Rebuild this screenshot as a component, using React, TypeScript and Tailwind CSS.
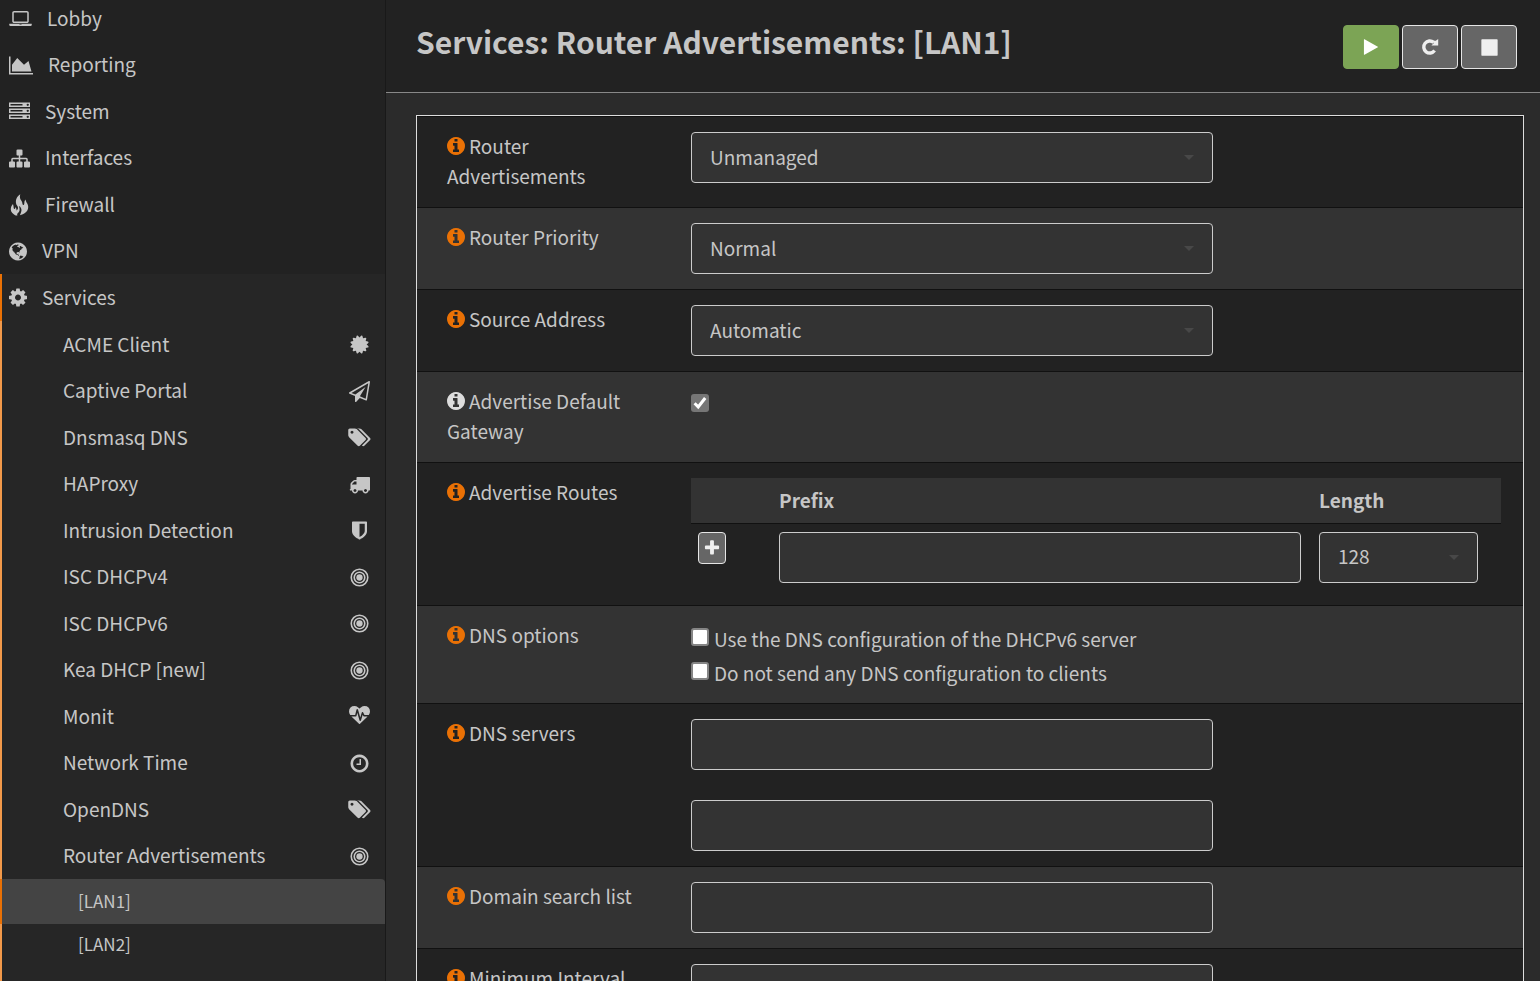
import type { ReactNode } from "react";

type IconName =
  | "laptop" | "chart" | "server" | "sitemap" | "fire" | "globe" | "cog"
  | "certificate" | "plane" | "tags" | "truck" | "shield" | "heartbeat" | "clock"
  | "info" | "play" | "stop" | "plus";

const icons: Record<IconName, string> = {
  laptop: "M416 1280q-66 0-113-47t-47-113v-704q0-66 47-113t113-47h1088q66 0 113 47t47 113v704q0 66-47 113t-113 47h-1088zm-32-864v704q0 13 9.5 22.5t22.5 9.5h1088q13 0 22.5-9.5t9.5-22.5v-704q0-13-9.5-22.5t-22.5-9.5h-1088q-13 0-22.5 9.5t-9.5 22.5zm1376 928h160v96q0 40-47 68t-113 28h-1600q-66 0-113-28t-47-68v-96h1760zm-720 96q16 0 16-16t-16-16h-160q-16 0-16 16t16 16h160z",
  chart: "M2048 1536v128h-2048v-1536h128v1408h1920zm-384-1024l256 896h-1664v-576l448-576 576 576z",
  server: "M128 1408h1024v-128h-1024v128zm0-512h1024v-128h-1024v128zm1568 448q0-40-28-68t-68-28-68 28-28 68 28 68 68 28 68-28 28-68zm-1568-960h1024v-128h-1024v128zm1568 448q0-40-28-68t-68-28-68 28-28 68 28 68 68 28 68-28 28-68zm0-512q0-40-28-68t-68-28-68 28-28 68 28 68 68 28 68-28 28-68zm96 832v384h-1792v-384h1792zm0-512v384h-1792v-384h1792zm0-512v384h-1792v-384h1792z",
  sitemap: "M1792 1248v320q0 40-28 68t-68 28h-320q-40 0-68-28t-28-68v-320q0-40 28-68t68-28h96v-192h-512v192h96q40 0 68 28t28 68v320q0 40-28 68t-68 28h-320q-40 0-68-28t-28-68v-320q0-40 28-68t68-28h96v-192h-512v192h96q40 0 68 28t28 68v320q0 40-28 68t-68 28h-320q-40 0-68-28t-28-68v-320q0-40 28-68t68-28h96v-192q0-52 38-90t90-38h512v-192h-96q-40 0-68-28t-28-68v-320q0-40 28-68t68-28h320q40 0 68 28t28 68v320q0 40-28 68t-68 28h-96v192h512q52 0 90 38t38 90v192h96q40 0 68 28t28 68z",
  fire: "M960 0C640 220 560 480 600 760C620 960 800 1010 770 1200C750 1310 690 1340 640 1400C650 1250 610 1170 540 1100C545 1250 490 1290 430 1240C370 1180 420 1060 340 840C220 980 150 1130 150 1290C150 1520 330 1690 520 1790C640 1850 760 1830 700 1720C660 1640 860 1580 900 1380C920 1250 890 1140 840 1010C1010 1080 1080 1250 1060 1400C1040 1560 960 1680 930 1800C1260 1720 1640 1500 1640 1100C1640 800 1420 700 1420 460C1300 560 1320 700 1300 820C1290 900 1240 960 1180 900C1130 840 1160 700 1060 560C950 400 890 240 960 0z",
  globe: "M896 128q209 0 385.5 103t279.5 279.5 103 385.5-103 385.5-279.5 279.5-385.5 103-385.5-103-279.5-279.5-103-385.5 103-385.5 279.5-279.5 385.5-103zm274 521q-2 1-9.5 9.5t-13.5 9.5q2 0 4.5-5t5-11 3.5-7q6-7 22-15 14-6 52-12 34-8 51 11-2-2 9.5-13t14.5-12q3-2 15-4.5t15-7.5l2-22q-12 1-17.5-7t-6.5-21q0 2-6 8 0-7-4.5-8t-11.5 1-9 1q-10-3-15-7.5t-8-16.5-4-15q-2-5-9.5-11t-9.5-10q-1-2-2.5-5.5t-3-6.5-4-5.5-5.5-2.5-7 5-7.5 10-4.5 5q-3-2-6-1.5t-4.5 1-4.5 3-5 3.5q-3 2-8.5 3t-8.5 2q15-5-1-11-10-4-16-3 9-4 7.5-12t-8.5-14h5q-1-4-8.5-8.5t-17.5-8.5-13-6q-8-5-34-9.5t-33-.5q-5 6-4.5 10.5t4 14 3.5 12.5q1 6-5.5 13t-6.5 12q0 7 14 15.5t10 21.5q-3 8-16 16t-16 12q-5 8-1.5 18.5t10.5 16.5q2 2 1.5 4t-3.5 4.5-5.5 4-6.5 3.5l-3 2q-11 5-20.5-6t-13.5-26q-7-25-16-30-23-8-29 1-5-13-41-26-25-9-58-4 6-1 0-15-7-15-19-12 3-6 4-17.5t1-13.5q3-13 12-23 1-1 7-8.5t9.5-13.5.5-6q35 4 50-11 5-5 11.5-17t10.5-17q9-6 14-5.5t14.5 5.5 14.5 5q14 1 15.5-11t-7.5-20q12 1 3-17-4-7-8-9-12-4-27 5-8 4 2 8-1-1-9.5 10.5t-16.5 17.5-16-5q-1-1-5.5-13.5t-9.5-13.5q-8 0-16 15 3-8-11-15t-24-8q19-12-8-27-7-4-20.5-5t-19.5 4q-5 7-5.5 11.5t5 8 10.5 5.5 11.5 4 8.5 3q14 10 8 14-2 1-8.5 3.5t-11.5 4.5-6 4q-3 4 0 14t-2 14q-5-5-9-17.5t-7-16.5q7 9-25 6l-10-1q-4 0-16 2t-20.5 1-13.5-8q-4-8 0-20 1-4 4-2-4-3-11-9.5t-10-8.5q-46 15-94 41 6 1 12-1 5-2 13-6.5t10-5.5q34-14 42-7l5-5q14 16 20 25-7-4-30-1-20 6-22 12 7 12 5 18-4-3-11.5-10t-14.5-11-15-5q-16 0-22 1-146 80-235 222 7 7 12 8 4 1 5 9t2.5 11 11.5-3q9 8 3 19 1-1 44 27 19 17 21 21 3 11-10 18-1-2-9-9t-9-4q-3 5 .5 18.5t10.5 12.5q-7 0-9.5 16t-2.5 35.5-1 23.5l2 1q-3 12 5.5 34.5t21.5 19.5q-13 3 20 43 6 8 8 9 3 2 12 7.5t15 10 10 10.5q4 5 10 22.5t14 23.5q-2 6 9.5 20t10.5 23q-1 0-2.5 1t-2.5 1q3 7 15.5 14t15.5 13q1 3 2 10t3 11 8 2q2-20-24-62-15-25-17-29-3-5-5.5-15.5t-4.5-14.5q2 0 6 1.5t8.5 3.5 7.5 4 2 3q-3 7 2 17.5t12 18.5 17 19 12 13q6 6 14 19.5t0 13.5q9 0 20 10.5t17 19.5q5 8 8 26t5 24q2 7 8.5 13.5t12.5 9.5l16 8 13 7q5 2 18.5 10.5t21.5 11.5q10 4 16 4t14.5-2.5 13.5-3.5q15-2 29 15t21 21q36 19 55 11-2 1 .5 7.5t8 15.5 9 14.5 5.5 8.5q5 6 18 15t18 15q6-4 7-9-3 8 7 20t18 10q14-3 14-32-31 15-49-18 0-1-2.5-5.5t-4-8.5-2.5-8.5 0-7.5 5-3q9 0 10-3.5t-2-12.5-4-13q-1-8-11-20t-12-15q-5 9-16 8t-16-9q0 1-1.5 5.5t-1.5 6.5q-13 0-15-1 1-3 2.5-17.5t3.5-22.5q1-4 5.5-12t7.5-14.5 4-12.5-4.5-9.5-17.5-2.5q-19 1-26 20-1 3-3 10.5t-5 11.5-9 7q-7 3-24 2t-24-5q-13-8-22.5-29t-9.5-37q0-10 2.5-26.5t3-25-5.5-24.5q3-2 9-9.5t10-10.5q2-1 4.5-1.5t4.5 0 4-1.5 3-6q-1-1-4-3-3-3-4-3 7 3 28.5-1.5t27.5 1.5q15 11 22-2 0-1-2.5-9.5t-.5-13.5q5 27 29 9 3 3 15.5 5t17.5 5q3 2 7 5.5t5.5 4.5 5-.5 8.5-6.5q10 14 12 24 11 40 19 44 7 3 11 2t4.5-9.5 0-14-1.5-12.5l-1-8v-18l-1-8q-15-3-18.5-12t1.5-18.5 15-18.5q1-1 8-3.5t15.5-6.5 12.5-8q21-19 15-35 7 0 11-9-1 0-5-3t-7.5-5-4.5-2q9-5 2-16 5-3 7.5-11t7.5-10q9 12 21 2 7-8 1-16 5-7 20.5-10.5t18.5-9.5q7 2 8-2t1-12 3-12q4-5 15-9t13-5l17-11q3-4 0-4 18 2 31-11 10-11-6-20 3-6-3-9.5t-15-5.5q3-1 11.5-.5t10.5-1.5q15-10-7-16-17-5-43 12zm-163 877q206-36 351-189-3-3-12.5-4.5t-12.5-3.5q-18-7-24-8 1-7-2.5-13t-8-9-12.5-8-11-7q-2-2-7-6t-7-5.5-7.5-4.5-8.5-2-10 1l-3 1q-3 1-5.5 2.5t-5.5 3-4 3 0 2.5q-21-17-36-22-5-1-11-5.5t-10.5-7-10-1.5-11.5 7q-5 5-6 15t-2 13q-7-5 0-17.5t2-18.5q-3-6-10.5-4.5t-12 4.5-11.5 8.5-9 6.5-8.5 5.5-8.5 7.5q-3 4-6 12t-5 11q-2-4-11.5-6.5t-9.5-5.5q2 10 4 35t5 38q7 31-12 48-27 25-29 40-4 22 12 26 0 7-8 20.5t-7 21.5q0 6 2 16z",
  cog: "M1152 896q0-106-75-181t-181-75-181 75-75 181 75 181 181 75 181-75 75-181zm512-109v222q0 12-8 23t-20 13l-185 28q-19 54-39 91 35 50 107 138 10 12 10 25t-9 23q-27 37-99 108t-94 71q-12 0-26-9l-138-108q-44 23-91 38-16 136-29 186-7 28-36 28h-222q-14 0-24.5-8.5t-11.5-21.5l-28-184q-49-16-90-37l-141 107q-10 9-25 9-14 0-25-11-126-114-165-168-7-10-7-23 0-12 8-23 15-21 51-66.5t54-70.5q-27-50-41-99l-183-27q-13-2-21-12.5t-8-23.5v-222q0-12 8-23t19-13l186-28q14-46 39-92-40-57-107-138-10-12-10-24 0-10 9-23 26-36 98.5-107.5t94.5-71.5q13 0 26 10l138 107q44-23 91-38 16-136 29-186 7-28 36-28h222q14 0 24.5 8.5t11.5 21.5l28 184q49 16 90 37l142-107q9-9 24-9 13 0 25 10 129 119 165 170 7 8 7 22 0 12-8 23-15 21-51 66.5t-54 70.5q26 50 41 98l183 28q13 2 21 12.5t8 23.5z",
  certificate: "M1504 896l138 135q30 28 20 70-12 41-52 51l-188 48 53 186q12 41-19 70-29 31-70 19l-186-53-48 188q-10 40-51 52-12 2-19 2-31 0-51-22l-135-138-135 138q-28 30-70 20-41-11-51-52l-48-188-186 53q-41 12-70-19-31-29-19-70l53-186-188-48q-40-10-52-51-10-42 20-70l138-135-138-135q-30-28-20-70 12-41 52-51l188-48-53-186q-12-41 19-70 29-31 70-19l186 53 48-188q10-41 51-51 41-12 70 19l135 139 135-139q29-30 70-19 41 10 51 51l48 188 186-53q41-12 70 19 31 29 19 70l-53 186 188 48q40 10 52 51 10 42-20 70z",
  plane: "M1764 11q33 24 27 64l-256 1536q-5 29-32 45-14 8-31 8-11 0-24-5l-527-215-298 327q-18 21-47 21-14 0-23-4-19-7-30-23.5t-11-36.5v-452l-472-193q-37-14-40-55-3-39 32-59l1664-960q35-21 68 2zm-342 1499l221-1323-1434 827 336 137 863-639-478 797z",
  tags: "M448 448q0-53-37.5-90.5t-90.5-37.5-90.5 37.5-37.5 90.5 37.5 90.5 90.5 37.5 90.5-37.5 37.5-90.5zm1067 576q0 53-37 90l-491 492q-39 37-91 37-53 0-90-37l-715-716q-38-37-64.5-101t-26.5-117v-416q0-52 38-90t90-38h416q53 0 117 26.5t102 64.5l715 714q37 39 37 91zm384 0q0 53-37 90l-491 492q-39 37-91 37-36 0-59-14t-53-45l470-470q37-37 37-90 0-52-37-91l-715-714q-38-38-102-64.5t-117-26.5h224q53 0 117 26.5t102 64.5l715 714q37 39 37 91z",
  truck: "M640 1408q0-52-38-90t-90-38-90 38-38 90 38 90 90 38 90-38 38-90zm-384-512h384v-256h-158q-13 0-22 9l-195 195q-9 9-9 22v30zm1280 512q0-52-38-90t-90-38-90 38-38 90 38 90 90 38 90-38 38-90zm256-1088v1024q0 15-4 26.5t-13.5 18.5-16.5 11.5-23.5 6-22.5 2-25.5 0-22.5-.5q0 106-75 181t-181 75-181-75-75-181h-384q0 106-75 181t-181 75-181-75-75-181h-64q-3 0-22.5.5t-25.5 0-22.5-2-23.5-6-16.5-11.5-13.5-18.5-4-26.5q0-26 19-45t45-19v-320q0-8-.5-35t0-38 2.5-34.5 6.5-37 14-30.5 22.5-30l198-198q19-19 50.5-32t58.5-13h160v-192q0-26 19-45t45-19h1024q26 0 45 19t19 45z",
  shield: "M1344 960v-640h-448v1137q119-63 213-137 235-184 235-360zm192-768v768q0 86-33.5 170.5t-83 150-118 127.5-126.5 103-121 77.5-89.5 49.5-42.5 20q-12 6-26 6t-26-6q-16-7-42.5-20t-89.5-49.5-121-77.5-126.5-103-118-127.5-83-150-33.5-170.5v-768q0-26 19-45t45-19h1152q26 0 45 19t19 45z",
  heartbeat: "M1280 896h305q-5 6-10 10.5t-9 7.5l-3 4-623 600q-18 18-44 18t-44-18l-624-602q-5-2-21-20h369q22 0 39.5-13.5t22.5-34.5l70-281 190 667q6 20 23 33t39 13q21 0 38-13t23-33l146-485 56 112q18 35 57 35zm512-428q0 145-103 300h-369l-111-221q-8-17-25.5-27t-36.5-8q-45 5-56 46l-129 430-196-686q-6-20-23.5-33t-39.5-13-39 13.5-22 34.5l-116 464h-423q-103-155-103-300 0-220 127-344t351-124q62 0 126.5 21.5t120 58 95.5 68.5 76 68q36-36 76-68t95.5-68.5 120-58 126.5-21.5q224 0 351 124t127 344z",
  clock: "M1024 544v448q0 14-9 23t-23 9h-320q-14 0-23-9t-9-23v-64q0-14 9-23t23-9h224v-352q0-14 9-23t23-9h64q14 0 23 9t9 23zm416 352q0-148-73-273t-198-198-273-73-273 73-198 198-73 273 73 273 198 198 273 73 273-73 198-198 73-273zm224 0q0 209-103 385.5t-279.5 279.5-385.5 103-385.5-103-279.5-279.5-103-385.5 103-385.5 279.5-279.5 385.5-103 385.5 103 279.5 279.5 103 385.5z",
  info: "M1152 1376v-160q0-14-9-23t-23-9h-96v-512q0-14-9-23t-23-9h-320q-14 0-23 9t-9 23v160q0 14 9 23t23 9h96v320h-96q-14 0-23 9t-9 23v160q0 14 9 23t23 9h448q14 0 23-9t9-23zm-128-896v-160q0-14-9-23t-23-9h-192q-14 0-23 9t-9 23v160q0 14 9 23t23 9h192q14 0 23-9t9-23zm640 416q0 209-103 385.5t-279.5 279.5-385.5 103-385.5-103-279.5-279.5-103-385.5 103-385.5 279.5-279.5 385.5-103 385.5 103 279.5 279.5 103 385.5z",
  play: "M1576 927l-1328 738q-23 13-39.5 3t-16.5-36v-1472q0-26 16.5-36t39.5 3l1328 738q23 13 23 31t-23 31z",
  stop: "M1664 192v1408q0 26-19 45t-45 19h-1408q-26 0-45-19t-19-45v-1408q0-26 19-45t45-19h1408q26 0 45 19t19 45z",
  plus: "M1600 736v192q0 40-28 68t-68 28h-416v416q0 40-28 68t-68 28h-192q-40 0-68-28t-28-68v-416h-416q-40 0-68-28t-28-68v-192q0-40 28-68t68-28h416v-416q0-40 28-68t68-28h192q40 0 68 28t28 68v416h416q40 0 68 28t28 68z",
};

function Icon({ name, box = "0 0 1792 1792", className = "size-[21px]" }: { name: IconName; box?: string; className?: string }) {
  return (
    <svg viewBox={box} className={`shrink-0 fill-current ${className}`} aria-hidden="true">
      <path d={icons[name]} />
    </svg>
  );
}

function Bullseye() {
  return (
    <svg viewBox="0 0 1792 1792" className="size-[21px] shrink-0 fill-none stroke-current" strokeWidth="136" aria-hidden="true">
      <circle cx="896" cy="896" r="704" />
      <circle cx="896" cy="896" r="450" />
      <circle cx="896" cy="896" r="270" className="fill-current stroke-none" />
    </svg>
  );
}

function Repeat() {
  return (
    <svg viewBox="0 0 18 18" className="size-[18px] fill-none stroke-current" aria-hidden="true">
      <path d="M13.6 12.6A6 6 0 1 1 12.6 4.4" strokeWidth="3.4" />
      <path d="M17.2 1v6.6h-6.8l2.4-2.4-1.6-2.4h3.6z" className="fill-current stroke-none" />
    </svg>
  );
}

const square = "h-[21px] w-[21px]";
const mainItems: { label: string; icon: IconName; box: string; size: string }[] = [
  { label: "Lobby", icon: "laptop", box: "0 0 1920 1792", size: "h-[21px] w-[23px]" },
  { label: "Reporting", icon: "chart", box: "0 0 2048 1792", size: "h-[21px] w-[24px]" },
  { label: "System", icon: "server", box: "0 0 1792 1792", size: square },
  { label: "Interfaces", icon: "sitemap", box: "0 0 1792 1792", size: square },
  { label: "Firewall", icon: "fire", box: "0 0 1792 1840", size: "h-[22px] w-[21px]" },
  { label: "VPN", icon: "globe", box: "128 0 1536 1792", size: "h-[21px] w-[18px]" },
];

const services: { label: string; icon: ReactNode }[] = [
  { label: "ACME Client", icon: <Icon name="certificate" /> },
  { label: "Captive Portal", icon: <Icon name="plane" /> },
  { label: "Dnsmasq DNS", icon: <Icon name="tags" box="0 0 1920 1792" className="h-[21px] w-[23px]" /> },
  { label: "HAProxy", icon: <Icon name="truck" /> },
  { label: "Intrusion Detection", icon: <Icon name="shield" /> },
  { label: "ISC DHCPv4", icon: <Bullseye /> },
  { label: "ISC DHCPv6", icon: <Bullseye /> },
  { label: "Kea DHCP [new]", icon: <Bullseye /> },
  { label: "Monit", icon: <Icon name="heartbeat" /> },
  { label: "Network Time", icon: <Icon name="clock" /> },
  { label: "OpenDNS", icon: <Icon name="tags" box="0 0 1920 1792" className="h-[21px] w-[23px]" /> },
  { label: "Router Advertisements", icon: <Bullseye /> },
];

function Sidebar() {
  return (
    <nav className="w-[386px] shrink-0 border-r border-[#191919] bg-[#222222] text-[#c6c6c6]">
      <ul className="-mt-[5px]">
        {mainItems.map((item) => (
          <li key={item.label} className="h-[46px] odd:h-[47px]">
            <a href="#" className="flex h-full items-center gap-[15px] pl-[9px]">
              <Icon name={item.icon} box={item.box} className={item.size} />
              <span className="pb-0.5">{item.label}</span>
            </a>
          </li>
        ))}
        <li className="bg-[#262626]">
          <a href="#" className="flex h-[47px] items-center gap-[15px] border-l-2 border-[#ea7105] pl-[7px]">
            <Icon name="cog" box="128 0 1536 1792" className="h-[21px] w-[18px]" />
            <span className="pb-0.5">Services</span>
          </a>
          <ul className="border-l-2 border-[#f2994a]">
            {services.map((item) => (
              <li key={item.label} className="h-[46px] odd:h-[47px]">
                <a href="#" className="flex h-full items-center justify-between pr-[13px] pl-[61px]">
                  <span className="pb-0.5">{item.label}</span>
                  <span className="flex w-[25px] justify-center">{item.icon}</span>
                </a>
              </li>
            ))}
          </ul>
          <a href="#" aria-current="page" className="flex h-[45px] items-center rounded-tr-sm border-l-2 border-[#ea7105] bg-[#444444] pb-0.5 pl-[76px] text-[17px]">
            [LAN1]
          </a>
          <a href="#" className="flex h-[60px] items-start border-l-2 border-[#f2994a] pt-[5px] pl-[76px] text-[17px]">
            [LAN2]
          </a>
        </li>
      </ul>
    </nav>
  );
}

const field = "h-[51px] rounded border border-[#cccccc] bg-[#333333] px-[18px] pb-0.5 text-[19px] text-[#c6c6c6]";

function Select({ id, value, label, className = "w-[522px]" }: { id: string; value: string; label?: string; className?: string }) {
  return (
    <div className={`relative ${className}`}>
      <select id={id} aria-label={label} defaultValue={value} className={`${field} block w-full appearance-none`}>
        <option>{value}</option>
      </select>
      <svg viewBox="0 0 10 5" className="pointer-events-none absolute top-[23px] right-[19px] h-[5px] w-[10px] fill-[#484848]" aria-hidden="true">
        <path d="M0 0h10L5 5z" />
      </svg>
    </div>
  );
}

function Row({ label, htmlFor, muted = false, children }: {
  label: string; htmlFor?: string; muted?: boolean; children: ReactNode;
}) {
  return (
    <div className="flex border-t border-[#111111] bg-[#222222] py-[15px] pr-[22px] pl-[30px] even:bg-[#333333]">
      <div className="-mt-px w-[244px] shrink-0 pr-[50px] pb-px">
        <label htmlFor={htmlFor} className="block leading-[30px]">
          <Icon
            name="info"
            box="128 128 1536 1536"
            className={`mr-1 mb-[5px] inline-block size-[18px] align-middle ${muted ? "text-[#dddddd]" : "text-[#ea7105]"}`}
          />
          {label}
        </label>
      </div>
      <div className="min-w-0 flex-1">{children}</div>
    </div>
  );
}

const tick = "mt-1 size-[18px] shrink-0 appearance-none rounded-[3px] border-2 border-[#858585] bg-white";
const toolButton = "flex h-[44px] w-[56px] items-center justify-center rounded border";

export default function App() {
  return (
    <div className="flex h-screen overflow-hidden bg-[#2b2b2b] font-['Noto_Sans_CJK_SC',sans-serif] text-[19px] leading-[30px] text-[#c6c6c6]">
      <Sidebar />
      <main className="min-w-0 flex-1">
        <header className="flex h-[93px] items-start justify-between border-b border-[#888888] bg-[#222222] pt-[25px] pr-[23px] pl-[30px]">
          <h1 className="text-[30px] leading-8 font-bold">Services: Router Advertisements: [LAN1]</h1>
          <div className="flex gap-[3px]">
            <button aria-label="Start" className={`${toolButton} border-[#7ca455] bg-[#7ca455] text-white`}>
              <Icon name="play" className="size-[18px]" />
            </button>
            <button aria-label="Restart" className={`${toolButton} border-[#e5e5e5] bg-[#666666] text-[#efefef]`}>
              <Repeat />
            </button>
            <button aria-label="Stop" className={`${toolButton} border-[#e5e5e5] bg-[#666666] text-[#efefef]`}>
              <Icon name="stop" className="size-[19px]" />
            </button>
          </div>
        </header>
        <form className="mt-[22px] mr-[16px] ml-[30px] border border-[#dddddd]">
          <Row label="Router Advertisements" htmlFor="mode">
            <Select id="mode" value="Unmanaged" />
          </Row>
          <Row label="Router Priority" htmlFor="priority">
            <Select id="priority" value="Normal" />
          </Row>
          <Row label="Source Address" htmlFor="source">
            <Select id="source" value="Automatic" />
          </Row>
          <Row label="Advertise Default Gateway" htmlFor="gateway" muted>
            <span className="relative mt-[7px] block size-[18px]">
              <input id="gateway" type="checkbox" defaultChecked className="block size-[18px] appearance-none rounded-[3px] bg-[#767676]" />
              <svg viewBox="0 0 18 18" className="pointer-events-none absolute inset-0 fill-none stroke-white" strokeWidth="3" aria-hidden="true">
                <path d="M3.6 9.3l3.6 3.6L14.2 4" />
              </svg>
            </span>
          </Row>
          <Row label="Advertise Routes">
            <table className="w-full table-fixed">
              <thead>
                <tr className="h-[45px] border-b border-[#111111] bg-[#333333] text-left">
                  <th aria-label="Add" className="w-[88px]" />
                  <th className="font-bold">Prefix</th>
                  <th className="w-[182px] font-bold">Length</th>
                </tr>
              </thead>
              <tbody>
                <tr className="align-top">
                  <td className="pt-2 pl-[7px]">
                    <button type="button" aria-label="Add route" className="flex h-8 w-7 items-center justify-center rounded border border-[#e5e5e5] bg-[#666666] text-[#efefef]">
                      <Icon name="plus" className="size-[18px]" />
                    </button>
                  </td>
                  <td className="pt-2 pb-[7px]">
                    <input aria-label="Prefix" className={`${field} block w-[522px]`} />
                  </td>
                  <td className="pt-2">
                    <Select id="length" label="Length" value="128" className="w-[159px]" />
                  </td>
                </tr>
              </tbody>
            </table>
          </Row>
          <Row label="DNS options">
            <div className="flex flex-col gap-1 pt-[3px]">
              <label className="flex gap-[5px]">
                <input type="checkbox" className={tick} />
                Use the DNS configuration of the DHCPv6 server
              </label>
              <label className="flex gap-[5px]">
                <input type="checkbox" className={tick} />
                Do not send any DNS configuration to clients
              </label>
            </div>
          </Row>
          <Row label="DNS servers" htmlFor="dns1">
            <div className="flex flex-col gap-[30px]">
              <input id="dns1" className={`${field} w-[522px]`} />
              <input aria-label="Second DNS server" className={`${field} w-[522px]`} />
            </div>
          </Row>
          <Row label="Domain search list" htmlFor="search">
            <input id="search" className={`${field} block w-[522px]`} />
          </Row>
          <Row label="Minimum Interval" htmlFor="interval">
            <input id="interval" className={`${field} block w-[522px]`} />
          </Row>
        </form>
      </main>
    </div>
  );
}
